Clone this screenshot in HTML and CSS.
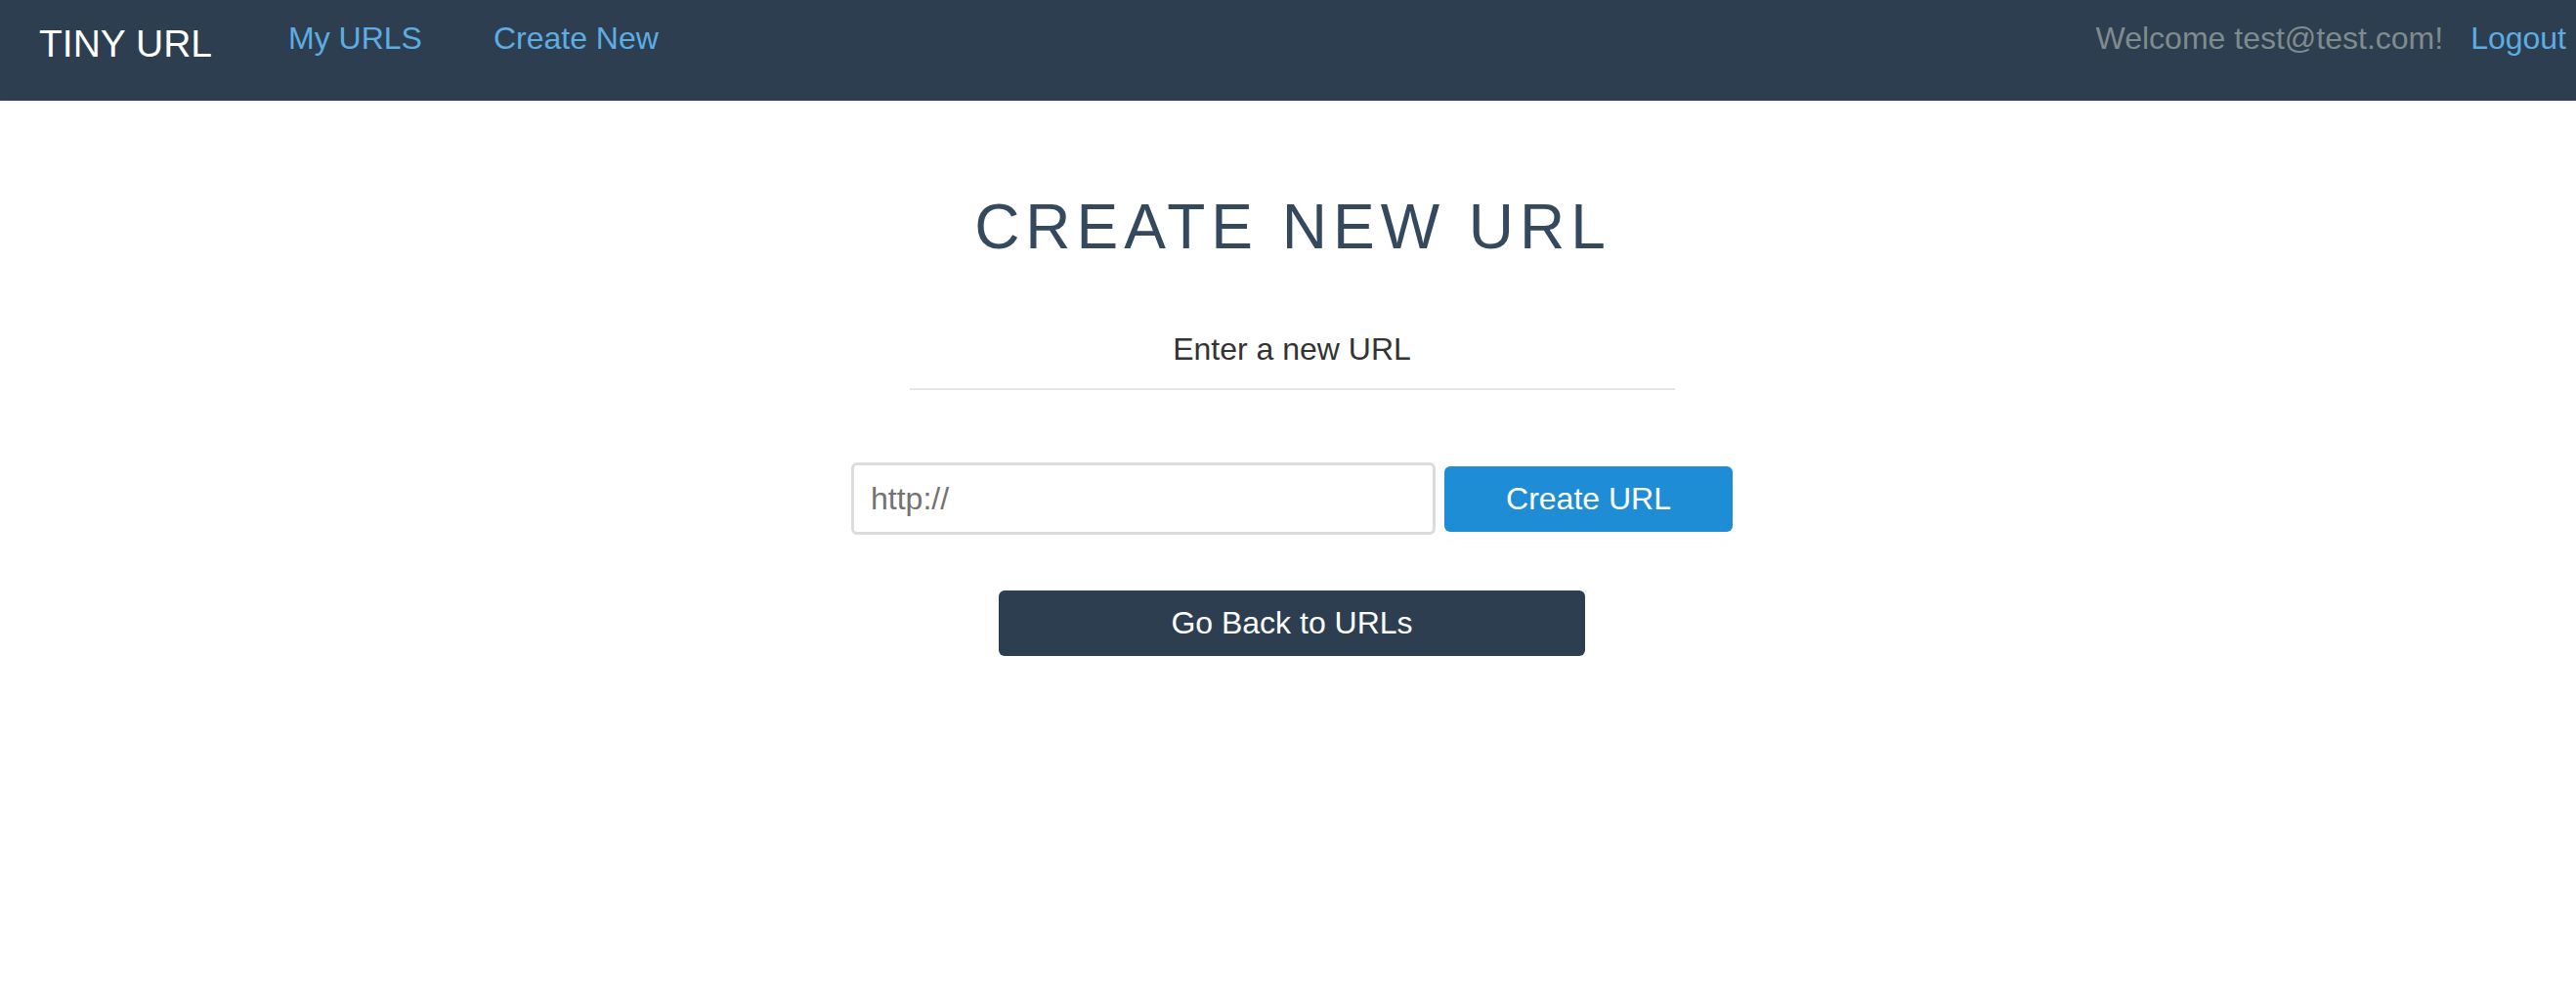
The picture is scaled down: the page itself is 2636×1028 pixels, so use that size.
FILE: index.html
```html
<!DOCTYPE html>
<html lang="en">
<head>
<meta charset="utf-8">
<title>Tiny URL - Create New</title>
<link rel="stylesheet" href="styles.css">
</head>
<body>
<nav class="navbar">
  <a class="brand" href="#">TINY URL</a>
  <a class="nav-link nav-first" href="#">My URLS</a>
  <a class="nav-link nav-second" href="#">Create New</a>
  <span class="welcome">Welcome test@test.com!</span>
  <a class="nav-link logout" href="#">Logout</a>
</nav>
<main class="content">
  <h1 class="title">CREATE NEW URL</h1>
  <p class="subtitle">Enter a new URL</p>
  <hr class="divider">
  <form class="url-form" onsubmit="return false;">
    <input class="url-input" type="text" placeholder="http://">
    <button class="btn btn-primary" type="submit">Create URL</button>
  </form>
  <a class="btn btn-back" href="#">Go Back to URLs</a>
</main>
</body>
</html>
```
FILE: styles.css
```css
html, body {
  margin: 0;
  padding: 0;
  background: #ffffff;
}

body {
  font-family: "Liberation Sans", Arial, Helvetica, sans-serif;
}

.navbar {
  height: 103px;
  box-sizing: border-box;
  background: #2d3e50;
  display: flex;
  align-items: flex-start;
  padding: 23px 10px 0 40px;
  box-shadow: 0 1px 3px rgba(0, 0, 0, 0.08);
}

.navbar a {
  text-decoration: none;
}

.brand {
  color: #ffffff;
  font-size: 39px;
  line-height: 1;
  margin-top: 2px;
  margin-right: 78px;
}

.nav-link {
  color: #5dade2;
  font-size: 32px;
  line-height: 1;
}

.nav-second {
  margin-left: 73px;
}

.welcome {
  margin-left: auto;
  color: #7f8c8d;
  font-size: 32px;
  line-height: 1;
  margin-right: 28px;
}

.content {
  display: flex;
  flex-direction: column;
  align-items: center;
  padding: 94px 0 0 8px;
}

.title {
  margin: 0;
  font-size: 64px;
  font-weight: normal;
  line-height: 70px;
  letter-spacing: 6px;
  color: #34495e;
  padding-left: 2px;
}

.subtitle {
  margin: 74px 0 0 0;
  font-size: 32px;
  line-height: 1;
  color: #333333;
}

.divider {
  width: 783px;
  height: 2px;
  border: 0;
  background: #e6e6e6;
  margin: 24px 0 0 0;
}

.url-form {
  display: flex;
  align-items: center;
  gap: 9px;
  margin-top: 74px;
}

.url-input {
  width: 598px;
  height: 74px;
  box-sizing: border-box;
  border: 3px solid #dcdcdc;
  border-radius: 6px;
  padding: 0 17px;
  font-family: "Liberation Sans", Arial, Helvetica, sans-serif;
  font-size: 32px;
  color: #555555;
  outline: none;
}

.url-input::placeholder {
  color: #737373;
}

.btn {
  display: flex;
  align-items: center;
  justify-content: center;
  box-sizing: border-box;
  height: 67px;
  border: 0;
  border-radius: 6px;
  font-family: "Liberation Sans", Arial, Helvetica, sans-serif;
  font-size: 32px;
  color: #ffffff;
  text-decoration: none;
  padding: 0;
}

.btn-primary {
  width: 295px;
  background: #1f8dd6;
}

.btn-back {
  width: 600px;
  margin-top: 57px;
  background: #2d3e50;
}
```
